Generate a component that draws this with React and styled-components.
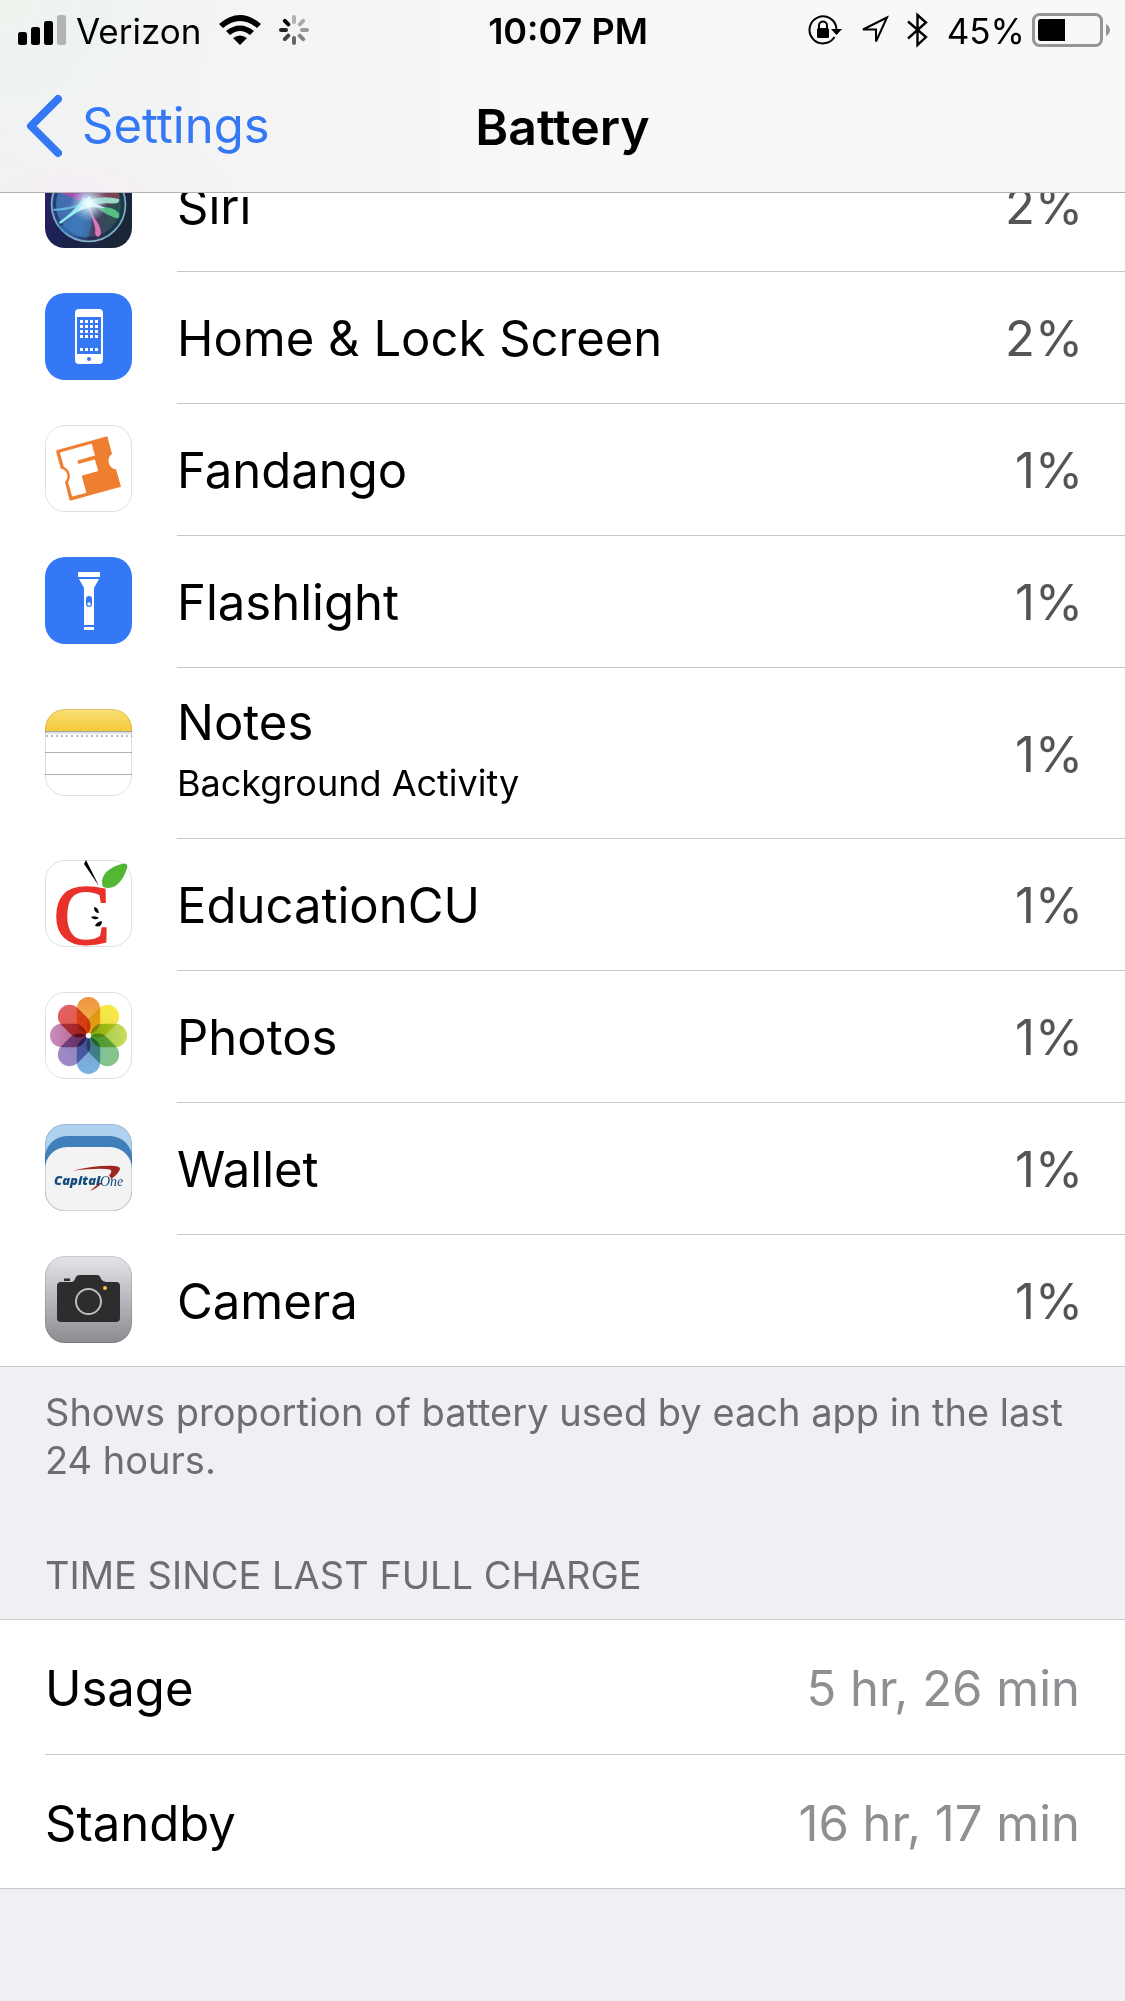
import styled, { createGlobalStyle } from "styled-components";

const GlobalStyle = createGlobalStyle`
  body {
    margin: 0;
    background-color: #efeff4;
    color: #000;
    font-family: "Inter", "Liberation Sans", sans-serif;
  }
`;

const Header = styled.header`
  position: sticky;
  top: 0;
  z-index: 1;
  border-bottom: 1px solid #b2b2b2;
  background: radial-gradient(ellipse 260px 190px at 0 0, #edf4ee, transparent),
    radial-gradient(ellipse 160px 70px at 80px 192px, #f4eff4, transparent),
    linear-gradient(90deg, #f2f2f3, #f8f8f8 60%);
`;

const StatusBar = styled.div`
  display: grid;
  grid-template-columns: 1fr auto 1fr;
  align-items: center;
  height: 60px;
  padding: 0 15px 0 18px;
  font-size: 35px;
  line-height: 44px;
  svg {
    display: block;
    flex: none;
  }
`;

const StatusGroup = styled.div`
  display: flex;
  align-items: center;
  justify-content: ${({ $end }) => ($end ? "flex-end" : "flex-start")};
  gap: ${({ $gap }) => $gap}px;
`;

const Time = styled.time`
  padding: 2px 0 0 8px;
  font-size: 36px;
  font-weight: 600;
`;

const StatusText = styled.span`
  padding-top: 2px;
`;

const NavBar = styled.nav`
  display: grid;
  grid-template-columns: 1fr auto 1fr;
  align-items: center;
  height: 132px;
  padding: 0 26px;
  box-sizing: border-box;
  h1 {
    margin: 0;
    padding-top: 2px;
    font-size: 50px;
    line-height: 60px;
    font-weight: 600;
  }
`;

const BackLink = styled.a`
  display: flex;
  align-items: center;
  gap: 20px;
  color: #3478f6;
  font-size: 49px;
  line-height: 60px;
  text-decoration: none;
`;

// the list is scrolled, so its first row is partly under the header
const AppList = styled.ul`
  margin: -53px 0 0;
  padding: 0;
  list-style: none;
  background-color: #fff;
  border-bottom: 1px solid #c8c7cc;
`;

const RowBody = styled.div`
  display: flex;
  flex: 1;
  align-items: center;
  justify-content: space-between;
  min-height: 132px;
  padding: 3px 42px 0 0;
  box-sizing: border-box;
  border-bottom: 1px solid #c8c7cc;
  font-size: 49px;
  line-height: 60px;
`;

const AppRow = styled.li`
  display: flex;
  align-items: center;
  gap: 45px;
  padding-left: 45px;
  > svg {
    flex: none;
    margin-bottom: 3px;
  }
  &:last-child ${RowBody} {
    min-height: 131px;
    border-bottom: none;
  }
`;

const AppName = styled.div`
  display: flex;
  flex-direction: column;
  gap: 6px;
  padding: ${({ $detailed }) => ($detailed ? "22px 0 31px" : "0")};
  small {
    font-size: 36px;
    line-height: 48px;
  }
`;

const Percent = styled.span`
  color: #555;
`;

const Note = styled.p`
  margin: 0;
  padding: 21px 45px 0;
  color: #6d6d72;
  font-size: 38px;
  line-height: 48px;
`;

const SectionTitle = styled.h2`
  margin: 0;
  padding: 67px 45px 20px;
  color: #6d6d72;
  font-size: 38px;
  line-height: 48px;
  font-weight: 400;
  text-transform: uppercase;
`;

const TimeList = styled.dl`
  margin: 0;
  padding-left: 45px;
  background-color: #fff;
  border-top: 1px solid #c8c7cc;
  border-bottom: 1px solid #c8c7cc;
`;

const TimeRow = styled.div`
  display: flex;
  align-items: center;
  justify-content: space-between;
  height: 134px;
  padding: 4px 45px 0 0;
  box-sizing: border-box;
  font-size: 49px;
  line-height: 60px;
  & + & {
    border-top: 1px solid #c8c7cc;
  }
  dd {
    margin: 0;
    color: #8e8e93;
  }
`;

function Tile({ id, fill = "#fff", outlined, children }) {
  return (
    <svg width="87" height="87" viewBox="0 0 87 87" overflow="visible" aria-hidden="true">
      <clipPath id={`tile-${id}`}>
        <rect width="87" height="87" rx="20" />
      </clipPath>
      <rect width="87" height="87" rx="20" fill={fill} />
      {children}
      {outlined && (
        <rect x="0.5" y="0.5" width="86" height="86" rx="19.5" fill="none" stroke="#000" strokeOpacity="0.12" />
      )}
    </svg>
  );
}

function SiriIcon() {
  return (
    <Tile id="siri" fill="url(#siri-back)">
      <linearGradient id="siri-back" x1="0" y1="0" x2="1" y2="0.6">
        <stop offset="0" stopColor="#34206e" />
        <stop offset="0.5" stopColor="#1b2152" />
        <stop offset="1" stopColor="#1b2538" />
      </linearGradient>
      <linearGradient id="siri-orb" x1="0" y1="0.4" x2="1" y2="0.6">
        <stop offset="0" stopColor="#3a6db0" />
        <stop offset="0.45" stopColor="#4d70ae" />
        <stop offset="0.65" stopColor="#43405f" />
        <stop offset="1" stopColor="#1f5a4c" />
      </linearGradient>
      <radialGradient id="siri-glow">
        <stop offset="0" stopColor="#fff" />
        <stop offset="0.3" stopColor="#d5f5fa" stopOpacity="0.8" />
        <stop offset="1" stopColor="#a8c8f0" stopOpacity="0" />
      </radialGradient>
      <circle cx="43.5" cy="43.5" r="37" fill="url(#siri-orb)" stroke="#7fb0c8" strokeWidth="1.6" />
      <circle cx="43.5" cy="43.5" r="34" fill="none" stroke="#16204a" strokeWidth="3" opacity="0.6" />
      <path d="M43 43 10 30Q24 10 40 14Z" fill="#a14fae" />
      <path d="M44 43 52 12Q76 18 74 41Q58 46 44 43Z" fill="#8d4258" opacity="0.8" />
      <path d="M43 44Q22 66 12 65Q20 76 42 77Q50 62 43 44Z" fill="#367fc0" opacity="0.6" />
      <path d="M8 48Q28 47 43 39Q30 50 9 50Z" fill="#6fc8e5" opacity="0.8" />
      <path d="M14 61Q28 52 39 36L47 43Q31 51 15 63Z" fill="#90f2ee" />
      <path d="M40 42Q52 65 50 72Q52 79 56 73Q56 65 50 58Q45 50 46 40Z" fill="#dd76b6" />
      <path d="M43 37Q54 51 68 56Q76 60 74 52Q68 45 55 46Z" fill="#57bd83" />
      <path d="M43 39Q59 34 74 38Q76 44 62 42Q52 43 43 45Z" fill="#9bdbc8" />
      <path d="M44 35 49 42 60 47 46 46 33 50 38 42Z" fill="#eaffff" />
      <circle cx="44" cy="42" r="19" fill="url(#siri-glow)" />
    </Tile>
  );
}

function HomeScreenIcon() {
  return (
    <Tile id="home" fill="#3478f6">
      <rect x="30" y="16" width="28" height="55" rx="4" fill="#fff" />
      <rect x="32" y="24" width="24" height="37" fill="#3478f6" />
      {[27, 32, 37, 42, 55].map((y) =>
        [35, 40, 45, 50].map((x) => <rect key={`${x}-${y}`} x={x} y={y} width="3" height="3" fill="#fff" />)
      )}
      <circle cx="44" cy="66" r="2" fill="#3478f6" />
    </Tile>
  );
}

function FandangoIcon() {
  return (
    <Tile id="fandango" outlined>
      <path d="M11.3 25.3 62.3 11.3 67 29A8.5 8.5 0 0 0 71 44.3L76 61.7 25 75.7 20.3 57A8.5 8.5 0 0 0 16.3 42.3Z" fill="#ee7f30" />
      <text
        x="23.5"
        y="70.5"
        transform="rotate(-15.5 23.5 70.5)"
        fill="#fff"
        stroke="#fff"
        strokeWidth="4"
        fontFamily="DejaVu Sans"
        fontWeight="700"
        fontSize="57"
      >
        F
      </text>
      <path d="M16.300 42.300A8.5 8.5 0 0 1 20.300 57" fill="#fff" />
      <path d="M12.3 26.500 16.800 42.800A8.500 8.500 0 0 1 21.300 57L25.700 74.500" fill="none" stroke="#ee7f30" strokeWidth="2.4" />
    </Tile>
  );
}

function FlashlightIcon() {
  return (
    <Tile id="flashlight" fill="#3478f6">
      <path d="M33 15H55V20H33ZM34 22H54L49 31V68H39V31ZM39 70H49V73H39Z" fill="#fff" />
      <rect x="41" y="39" width="6" height="11" rx="3" fill="#3478f6" />
      <circle cx="44" cy="47" r="1.7" fill="#fff" />
    </Tile>
  );
}

function NotesIcon() {
  return (
    <Tile id="notes" outlined>
      <linearGradient id="notes-top" x2="0" y2="1">
        <stop offset="0" stopColor="#fadf76" />
        <stop offset="1" stopColor="#f6ca3c" />
      </linearGradient>
      <rect width="87" height="22" fill="url(#notes-top)" clipPath="url(#tile-notes)" />
      <path d="M0 22.5H87" stroke="#a7a696" />
      <path d="M0 24H87" stroke="#dfe3e6" strokeWidth="2" />
      <path d="M1 27H87" stroke="#b9b9b9" strokeWidth="2" strokeDasharray="2 3" />
      <path d="M0 43.5H87M0 65.5H87" stroke="#b0b0b0" />
    </Tile>
  );
}

function EducationIcon() {
  return (
    <Tile id="education" outlined>
      <text
        x="9"
        y="84"
        fill="#e9312b"
        stroke="#e9312b"
        strokeWidth="2.5"
        fontFamily="Liberation Serif"
        fontSize="84"
      >
        C
      </text>
      <path d="M39 4 41 0 54 26Z" />
      <path d="M58 27C53 13 69 5 80 3.500Q83 4 82 8C79 19 70 32 58 27Z" fill="#54b635" />
      <path d="M49 47Q53 47 54 53Q49 53 49 47ZM46 57Q50 55 54 58Q49 61 46 57ZM57 61Q57 68 50 66Q51 62 57 61Z" />
    </Tile>
  );
}

const petals = [
  ["#ef9440", "#f3bd4e"],
  ["#fae94a", "#e9df45"],
  ["#cbdc5c", "#93c54b"],
  ["#86c383", "#7fc0ae"],
  ["#78b3e1", "#7c9fd0"],
  ["#9f8cc6", "#8a7fb9"],
  ["#c98dc0", "#b55b82"],
  ["#e0636c", "#e3552c"],
];

const PetalGroup = styled.g`
  isolation: isolate;
  rect {
    mix-blend-mode: multiply;
  }
`;

function PhotosIcon() {
  return (
    <Tile id="photos" outlined>
      {petals.map(([outer, inner], i) => (
        <linearGradient key={i} id={`petal-${i}`} x2="0" y2="1">
          <stop offset="0" stopColor={outer} />
          <stop offset="1" stopColor={inner} />
        </linearGradient>
      ))}
      <PetalGroup>
        {petals.map((_, i) => (
          <rect
            key={i}
            x="31.8"
            y="5"
            width="23.4"
            height="36.5"
            rx="11.7"
            fill={`url(#petal-${i})`}
            transform={`rotate(${i * 45} 43.5 43.5)`}
          />
        ))}
      </PetalGroup>
      <circle cx="43.5" cy="43.5" r="2.6" fill="#fff" />
    </Tile>
  );
}

function WalletIcon() {
  return (
    <Tile id="wallet" fill="#aed2ef" outlined>
      <g clipPath="url(#tile-wallet)">
        <rect y="12" width="87" height="90" rx="22" fill="#3f80ba" />
        <rect y="23" width="87" height="90" rx="22" fill="#f3f3f3" />
      </g>
      <path d="M27.7 46.7Q48 41.5 66 41.7Q76 42 75 45Q74 49 66.5 55L64 51.5Q68 47 65 45.5Q55 43.5 27.7 46.7ZM57 59Q51 65 45 67Q51 62 54 59Z" fill="#9f251f" />
      <text x="9" y="61" fill="#134a7c" fontFamily="Open Sans" fontWeight="800" fontStyle="italic" fontSize="13">
        Capital
      </text>
      <text x="55" y="62" fill="#134a7c" fontFamily="Liberation Serif" fontStyle="italic" fontSize="14">
        One
      </text>
    </Tile>
  );
}

function CameraIcon() {
  return (
    <Tile id="camera" fill="url(#camera-back)" outlined>
      <linearGradient id="camera-back" x2="0" y2="1">
        <stop offset="0" stopColor="#e5e4ea" />
        <stop offset="1" stopColor="#8c8b90" />
      </linearGradient>
      <path
        d="M16 26H26Q29 26 30 23Q31 19 35 19H52Q55 19 56 23Q58 26 61 26H71Q75 26 75 30V62Q75 66 71 66H16Q12 66 12 62V30Q12 26 16 26ZM19 22.5H25V25H19Z"
        fill="#2d2d2d"
      />
      <circle cx="43.5" cy="45.5" r="12.5" fill="none" stroke="#bdbcc1" strokeWidth="2" />
      <circle cx="60" cy="32" r="2" fill="#f5c93b" />
    </Tile>
  );
}

function SignalIcon() {
  return (
    <svg width="48" height="30" viewBox="0 0 48 30" aria-hidden="true">
      <rect y="17" width="9" height="13" rx="2.5" />
      <rect x="13" y="12" width="9" height="18" rx="2.5" />
      <rect x="26" y="6" width="9" height="24" rx="2.5" />
      <rect x="39" width="9" height="30" rx="2.5" fill="#b2b4b1" />
    </svg>
  );
}

function WifiIcon() {
  return (
    <svg width="42" height="30" viewBox="0 0 42 30" aria-hidden="true">
      <path d="M0 9Q21 -9 42 9L38 13Q21 -1 4 13Z" />
      <path d="M7 16Q21 5 35 16L31 20Q21 12 11 20Z" />
      <path d="M14 23Q21 18 28 23L21 30Z" />
    </svg>
  );
}

const spokes = ["#b1b1b1", "#a9a9a9", "#999", "#838383", "#666", "#444", "#222", "#000"];

function SpinnerIcon() {
  return (
    <svg width="30" height="30" viewBox="0 0 30 30" aria-hidden="true">
      {spokes.map((color, i) => (
        <path
          key={color}
          d="M15 2V7"
          stroke={color}
          strokeWidth="4"
          strokeLinecap="round"
          transform={`rotate(${i * 45} 15 15)`}
        />
      ))}
    </svg>
  );
}

function RotationLockIcon() {
  return (
    <svg width="34" height="30" viewBox="0 0 34 30" aria-hidden="true">
      <path d="M26.5 22A13.5 13.5 0 1 1 28.5 14" fill="none" stroke="#000" strokeWidth="2" />
      <path d="M23 14H34L28.5 20Z" />
      <rect x="9" y="13" width="12" height="10" rx="1.5" />
      <path d="M11 14V10.5A4 4 0 0 1 19 10.5V14" fill="none" stroke="#000" strokeWidth="2" />
    </svg>
  );
}

function LocationIcon() {
  return (
    <svg width="29" height="30" viewBox="0 0 29 30" aria-hidden="true">
      <path d="M27 2.5 3 14.5H16V26.5Z" fill="none" stroke="#000" strokeWidth="2" />
    </svg>
  );
}

function BluetoothIcon() {
  return (
    <svg width="22" height="36" viewBox="0 0 22 36" aria-hidden="true">
      <path d="M1 9.5 19 25 10.5 33V3L19 10.5 1 26.5" fill="none" stroke="#000" strokeWidth="2.4" />
    </svg>
  );
}

function BatteryIcon() {
  return (
    <svg width="78" height="34" viewBox="0 0 78 34" aria-hidden="true">
      <rect x="1.5" y="1.5" width="68" height="31" rx="6" fill="none" stroke="#959595" strokeWidth="3" />
      <path d="M9 6H33V28H9Q6 28 6 25V9Q6 6 9 6Z" />
      <path d="M74 11Q78 13 78 17T74 23Z" fill="#959595" />
    </svg>
  );
}

const apps = [
  { name: "Siri", percent: "2%", Icon: SiriIcon },
  { name: "Home & Lock Screen", percent: "2%", Icon: HomeScreenIcon },
  { name: "Fandango", percent: "1%", Icon: FandangoIcon },
  { name: "Flashlight", percent: "1%", Icon: FlashlightIcon },
  { name: "Notes", detail: "Background Activity", percent: "1%", Icon: NotesIcon },
  { name: "EducationCU", percent: "1%", Icon: EducationIcon },
  { name: "Photos", percent: "1%", Icon: PhotosIcon },
  { name: "Wallet", percent: "1%", Icon: WalletIcon },
  { name: "Camera", percent: "1%", Icon: CameraIcon },
];

export default function App() {
  return (
    <>
      <GlobalStyle />
      <Header>
        <StatusBar>
          <StatusGroup $gap={18}>
            <StatusGroup $gap={10}>
              <SignalIcon />
              <StatusText>Verizon</StatusText>
            </StatusGroup>
            <WifiIcon />
            <SpinnerIcon />
          </StatusGroup>
          <Time>10:07 PM</Time>
          <StatusGroup $end $gap={18}>
            <RotationLockIcon />
            <LocationIcon />
            <BluetoothIcon />
            <StatusGroup $gap={7}>
              <StatusText>45%</StatusText>
              <BatteryIcon />
            </StatusGroup>
          </StatusGroup>
        </StatusBar>
        <NavBar>
          <BackLink href="#settings">
            <svg width="36" height="64" viewBox="0 0 36 64" aria-hidden="true">
              <path
                d="M32 5 5 32 32 59"
                fill="none"
                stroke="#3478f6"
                strokeWidth="8"
                strokeLinecap="round"
                strokeLinejoin="round"
              />
            </svg>
            Settings
          </BackLink>
          <h1>Battery</h1>
        </NavBar>
      </Header>
      <main>
        <AppList>
          {apps.map(({ name, detail, percent, Icon }) => (
            <AppRow key={name}>
              <Icon />
              <RowBody>
                <AppName $detailed={Boolean(detail)}>
                  {name}
                  {detail && <small>{detail}</small>}
                </AppName>
                <Percent>{percent}</Percent>
              </RowBody>
            </AppRow>
          ))}
        </AppList>
        <Note>Shows proportion of battery used by each app in the last 24 hours.</Note>
        <SectionTitle>Time since last full charge</SectionTitle>
        <TimeList>
          <TimeRow>
            <dt>Usage</dt>
            <dd>5 hr, 26 min</dd>
          </TimeRow>
          <TimeRow>
            <dt>Standby</dt>
            <dd>16 hr, 17 min</dd>
          </TimeRow>
        </TimeList>
      </main>
    </>
  );
}
